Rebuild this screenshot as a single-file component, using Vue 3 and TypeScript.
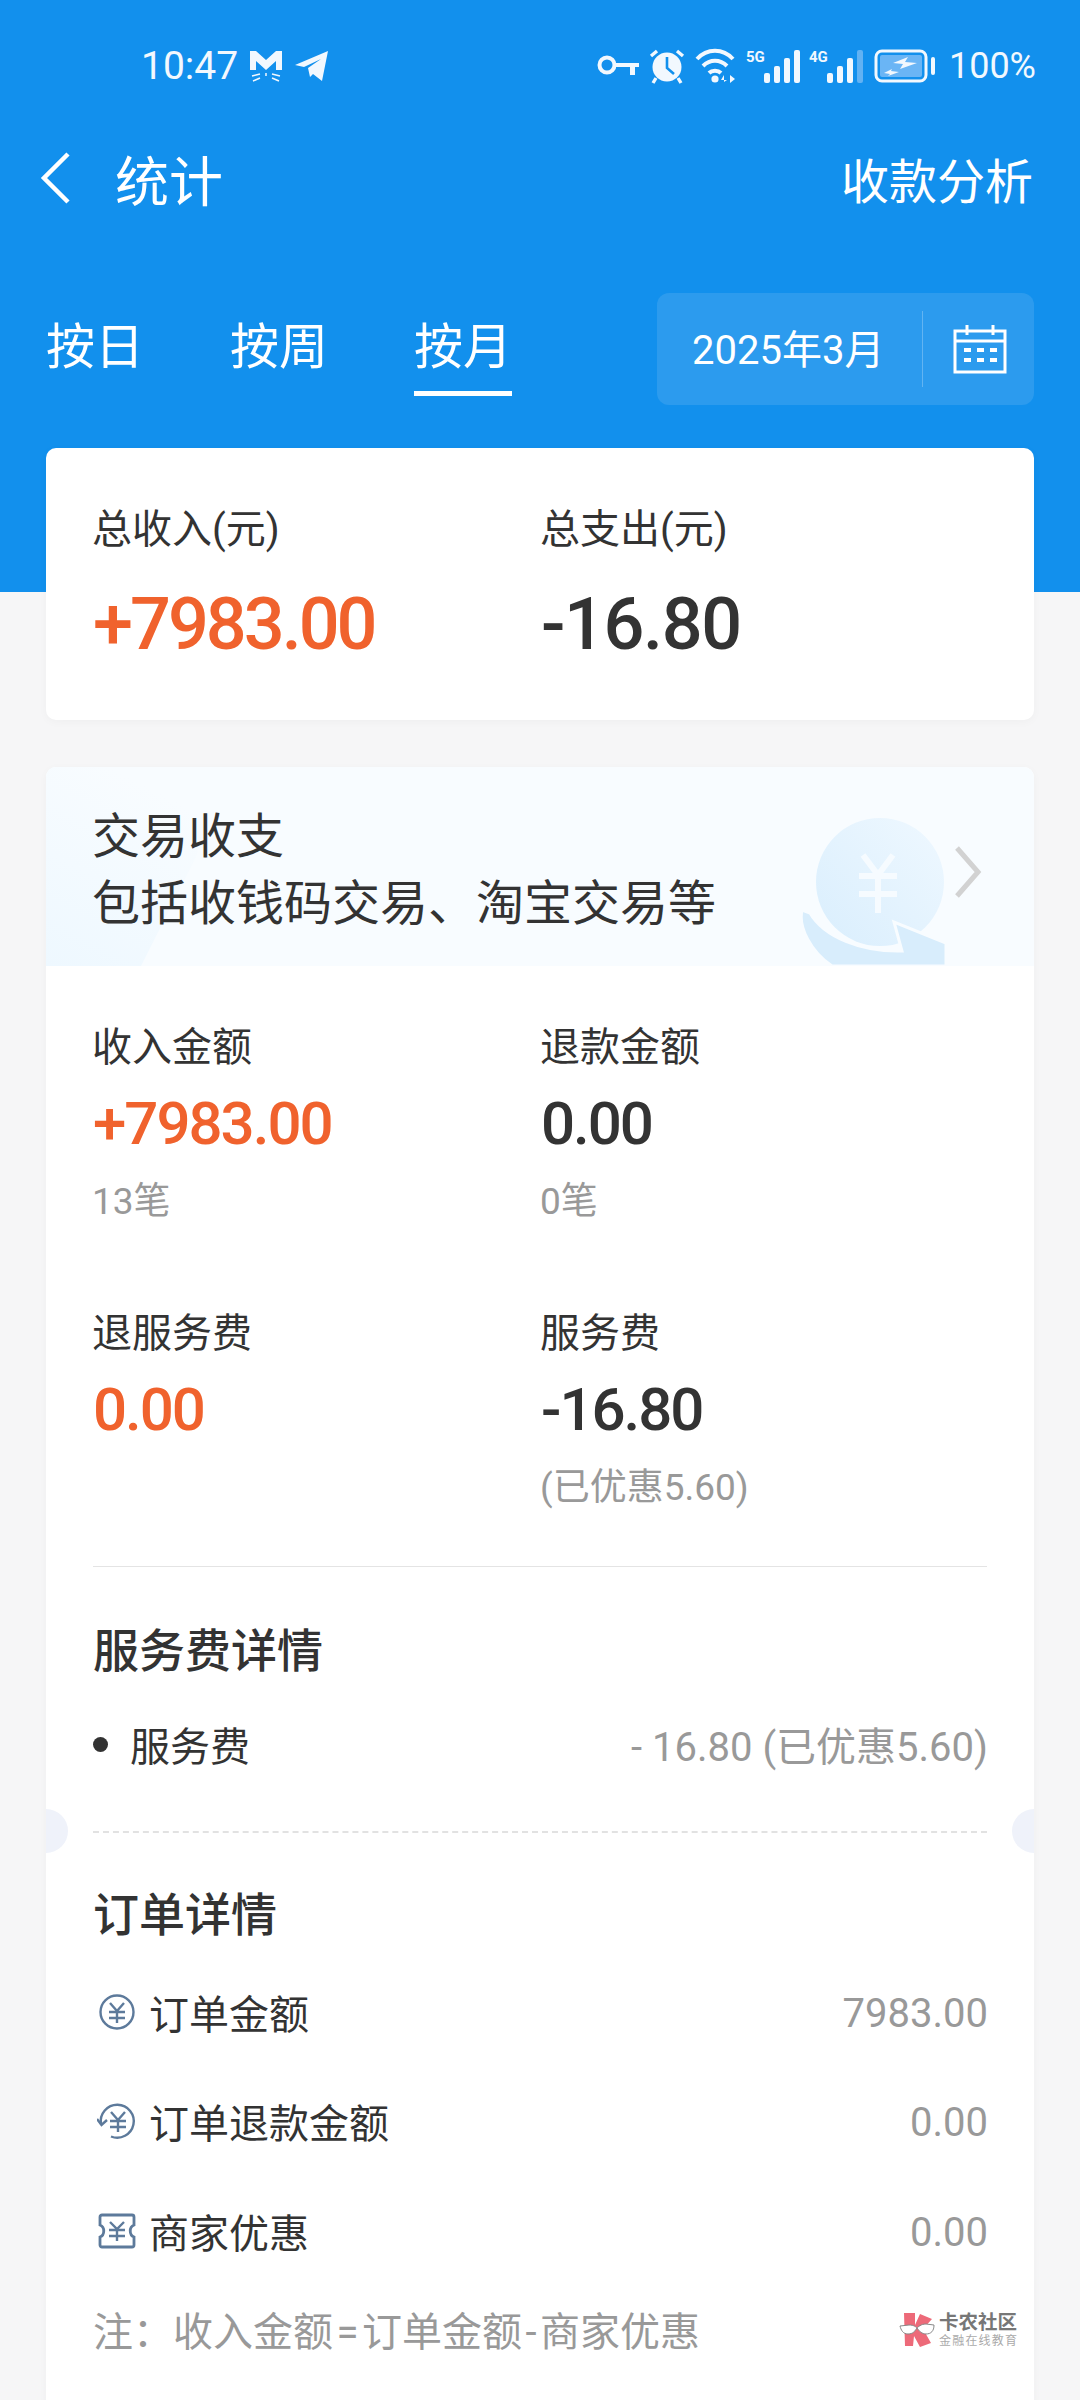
<script setup lang="ts">
const tabs = [
  { label: '按日', active: false },
  { label: '按周', active: false },
  { label: '按月', active: true },
]
const metrics = [
  { label: '收入金额', value: '+7983.00', sub: '13笔', hot: true },
  { label: '退款金额', value: '0.00', sub: '0笔', hot: false },
  { label: '退服务费', value: '0.00', sub: '', hot: true },
  { label: '服务费', value: '-16.80', sub: '(已优惠5.60)', hot: false },
]
const bars = [
  { x: 0, y: 24, h: 10 },
  { x: 10, y: 17, h: 17 },
  { x: 20, y: 9, h: 25 },
  { x: 30, y: 1, h: 33 },
]
</script>

<template>
  <div class="page">
    <header class="hero">
      <div class="status">
        <span class="time">10:47</span>
        <svg class="notif" width="36" height="34" viewBox="0 0 36 34">
          <path d="M2 2h6l10 9 10-9h6v19h-6v-9l-10 9-10-9v9H2z" fill="#f2f8fe" />
          <path d="M4 27l8-2M5 32l7-3M32 27l-8-2M31 32l-7-3M18 24v3" stroke="#f2f8fe" stroke-width="1.5" fill="none" />
        </svg>
        <svg class="notif" width="36" height="32" viewBox="0 0 36 32">
          <path d="M1 15L34 1 28 31 19 24l-3 3-2-9 13-9-17 8z" fill="#f2f8fe" />
        </svg>
        <div class="status-right">
          <svg width="42" height="22" viewBox="0 0 42 22">
            <circle cx="10" cy="10" r="7.5" fill="none" stroke="#f2f8fe" stroke-width="4" />
            <path d="M17 8h25v4h-4v8h-5v-8H17z" fill="#f2f8fe" />
          </svg>
          <svg width="38" height="36" viewBox="0 0 38 36">
            <circle cx="19" cy="19" r="14.5" fill="#f2f8fe" />
            <path d="M19 9v11l7 6" stroke="#1290ed" stroke-width="2.6" fill="none" />
            <path d="M3 8l6-5M35 8l-6-5" stroke="#f2f8fe" stroke-width="3.4" />
            <path d="M8 30l-3 5M30 30l3 5" stroke="#f2f8fe" stroke-width="3.4" />
          </svg>
          <svg width="42" height="36" viewBox="0 0 42 36">
            <path d="M2 11C12 0 28 0 38 11M8 18c7-7 17-7 24 0M14 25c3-3 9-3 12 0" stroke="#f2f8fe" stroke-width="4" fill="none" />
            <circle cx="20" cy="31" r="3.6" fill="#f2f8fe" />
            <path d="M29 34v-7l-3 5h6M35 27v8l5-4z" fill="#f2f8fe" />
          </svg>
          <div class="cell">
            <span class="net">5G</span>
            <svg width="36" height="34" viewBox="0 0 36 34">
              <rect v-for="b in bars" :key="b.x" :x="b.x" :y="b.y" width="6" :height="b.h" rx="2" fill="#f2f8fe" />
            </svg>
          </div>
          <div class="cell">
            <span class="net">4G</span>
            <svg width="36" height="34" viewBox="0 0 36 34">
              <rect v-for="b in bars" :key="b.x" :x="b.x" :y="b.y" width="6" :height="b.h" rx="2" :fill="b.x === 30 ? '#62b2f3' : '#f2f8fe'" />
            </svg>
          </div>
          <svg class="battery" width="64" height="34" viewBox="0 0 64 34">
            <rect x="2" y="2" width="50" height="30" rx="6" fill="none" stroke="#f2f8fe" stroke-width="3" />
            <rect x="6" y="6" width="42" height="22" rx="2" fill="#6ab5f5" />
            <path d="M59 10v14" stroke="#f2f8fe" stroke-width="4" stroke-linecap="round" />
            <path d="M19 14l15-6-3 5 12 1-17 6 3-5zM10 24l8-4-1 2 8 1-11 4 2-2z" fill="#f2f8fe" />
          </svg>
          <span class="pct">100%</span>
        </div>
      </div>
      <nav class="nav">
        <div class="nav-left">
          <svg width="34" height="54" viewBox="0 0 34 54">
            <path d="M30 3L6 27l24 24" fill="none" stroke="#fff" stroke-width="4.5" />
          </svg>
          <span class="title">统计</span>
        </div>
        <span class="action">收款分析</span>
      </nav>
      <div class="filters">
        <div class="tabs">
          <span v-for="t in tabs" :key="t.label" class="tab" :class="{ active: t.active }">{{ t.label }}</span>
        </div>
        <div class="date-box">
          <span class="date">2025年3月</span>
          <span class="date-sep"></span>
          <svg width="54" height="50" viewBox="0 0 54 50">
            <rect x="2" y="7" width="50" height="41" fill="none" stroke="#fff" stroke-width="3" />
            <path d="M2 17h50M14 1v10M40 1v10" stroke="#fff" stroke-width="3" />
            <path d="M11 26h7M24 26h7M37 26h7M11 36h7M24 36h7M37 36h7" stroke="#fff" stroke-width="4" />
          </svg>
        </div>
      </div>
    </header>

    <main class="main">
      <section class="card summary">
        <div class="col">
          <div class="sum-label">总收入(元)</div>
          <div class="sum-value hot tight">+7983.00</div>
        </div>
        <div class="col">
          <div class="sum-label">总支出(元)</div>
          <div class="sum-value">-16.80</div>
        </div>
      </section>

      <section class="card detail">
        <div class="banner">
          <svg class="banner-art" width="988" height="199" viewBox="0 0 988 199">
            <defs>
              <linearGradient id="blob" x1="0" y1="1" x2="0.4" y2="0">
                <stop offset="0" stop-color="#eef8ff" />
                <stop offset="1" stop-color="#f8fcff" />
              </linearGradient>
              <linearGradient id="coin" x1="0" y1="1" x2="1" y2="0">
                <stop offset="0" stop-color="#d9eefd" />
                <stop offset="1" stop-color="#eff8ff" />
              </linearGradient>
            </defs>
            <path d="M0 0h120c40 30 40 60 30 90l-55 109H0z" fill="url(#blob)" />
            <circle cx="834" cy="115" r="64" fill="url(#coin)" />
            <path d="M817 88l15 20 15-20M813 109h38M813 127h38M832 108v38" stroke="#f6fbff" stroke-width="6" fill="none" />
            <path d="M756 143C752 160 765 185 786 199H900V176L848 155 856 184C815 185 778 170 764 146Z" fill="#d8edfc" stroke="#f8fcff" stroke-width="3" />
            <path d="M911 81l21 24-21 24" fill="none" stroke="#d2d2d2" stroke-width="5" />
          </svg>
          <div class="banner-line">交易收支</div>
          <div class="banner-line">包括收钱码交易、淘宝交易等</div>
        </div>

        <div class="metrics">
          <div v-for="m in metrics" :key="m.label" class="metric">
            <div class="metric-label">{{ m.label }}</div>
            <div class="metric-value" :class="{ hot: m.hot }">{{ m.value }}</div>
            <div class="metric-sub">{{ m.sub }}</div>
          </div>
        </div>

        <div class="rule"></div>

        <h2 class="head first">服务费详情</h2>
        <div class="fee-row">
          <span class="dot"></span>
          <span class="fee-name">服务费</span>
          <span class="grey"><span class="minus">-</span>16.80 (已优惠5.60)</span>
        </div>

        <div class="dash-wrap">
          <span class="notch left"></span>
          <div class="dash"></div>
          <span class="notch right"></span>
        </div>

        <h2 class="head second">订单详情</h2>
        <div class="rows">
          <div class="row">
            <svg class="row-icon" width="40" height="40" viewBox="0 0 40 40">
              <circle cx="20" cy="20" r="16.5" fill="none" stroke="#5d7a9b" stroke-width="2.4" />
              <path d="M13 11l7 8 7-8M12 20h16M12 26h16M20 19v12" fill="none" stroke="#5d7a9b" stroke-width="2.4" />
            </svg>
            <span class="row-name">订单金额</span>
            <span class="grey num">7983.00</span>
          </div>
          <div class="row">
            <svg class="row-icon" width="40" height="40" viewBox="0 0 40 40">
              <path d="M4 23A16.5 16.5 0 1 1 14 35.5" fill="none" stroke="#5d7a9b" stroke-width="2.4" />
              <path d="M0 18l4.500 6 5.500-5" fill="none" stroke="#5d7a9b" stroke-width="2.4" />
              <path d="M14 11l7 8 7-8M13 20h16M13 26h16M21 19v12" fill="none" stroke="#5d7a9b" stroke-width="2.4" />
            </svg>
            <span class="row-name">订单退款金额</span>
            <span class="grey num">0.00</span>
          </div>
          <div class="row">
            <svg class="row-icon" width="40" height="40" viewBox="0 0 40 40">
              <path d="M5 4h30a2 2 0 0 1 2 2v8c-5 2-5 10 0 12v8a2 2 0 0 1-2 2H5a2 2 0 0 1-2-2v-8c5-2 5-10 0-12V6a2 2 0 0 1 2-2z" fill="none" stroke="#5d7a9b" stroke-width="2.800" />
              <path d="M13 11l7 7 7-7M12 19h16M12 25h16M20 18v12" fill="none" stroke="#5d7a9b" stroke-width="2.400" />
            </svg>
            <span class="row-name">商家优惠</span>
            <span class="grey num">0.00</span>
          </div>
        </div>
        <div class="note">注：收入金额<span class="sym">=</span>订单金额<span class="sym">-</span>商家优惠</div>
      </section>
    </main>

    <div class="watermark">
      <svg width="36" height="36" viewBox="0 0 36 36">
        <path d="M5 1h11v12L21 2l12 5-9 10 8 14-11 4-6-11-1 10H6z" fill="#ed6a79" />
        <path d="M1 14l9-1c5 0 7 2 8 3 1-1 4-4 9-4l8 1c0 6-3 9-8 9-4 0-7-3-9-6-2 3-4 6-9 6-5 0-7-4-8-8z" fill="#fff" stroke="#888" stroke-width="1" />
      </svg>
      <div class="wm-text">
        <div class="wm-top">卡农社区</div>
        <div class="wm-bottom">金融在线教育</div>
      </div>
    </div>
  </div>
</template>

<style scoped>
.page {
  position: relative;
  width: 1080px;
  height: 2400px;
  overflow: hidden;
  background: #f6f6f7;
  font-family: Roboto, "Noto Sans CJK SC", sans-serif;
  color: #333;
}
.hero {
  height: 592px;
  background: #1290ed;
  color: #fff;
}
.status {
  display: flex;
  align-items: center;
  height: 132px;
  padding: 0 44px 0 141px;
  color: #f2f8fe;
}
.time {
  font-size: 39px;
  margin-right: 10px;
}
.notif {
  margin-right: 10px;
}
.status-right {
  display: flex;
  align-items: center;
  gap: 9px;
  margin-left: auto;
}
.cell {
  display: flex;
  align-items: flex-start;
  height: 34px;
}
.net {
  font-size: 15px;
  font-weight: 700;
  line-height: 16px;
  width: 18px;
}
.battery {
  margin-left: 2px;
}
.pct {
  font-size: 36px;
  margin-left: 2px;
}
.nav {
  display: flex;
  align-items: center;
  justify-content: space-between;
  height: 92px;
  padding: 0 47px 0 38px;
}
.nav-left {
  display: flex;
  align-items: center;
  gap: 43px;
}
.title {
  font-size: 54px;
}
.action {
  font-size: 48px;
}
.filters {
  display: flex;
  justify-content: space-between;
  align-items: flex-start;
  margin-top: 69px;
  padding: 0 46px;
}
.tabs {
  display: flex;
  gap: 86px;
  margin-top: 25px;
}
.tab {
  font-size: 49px;
  line-height: 60px;
  padding-bottom: 13px;
  border-bottom: 5px solid transparent;
}
.tab.active {
  border-bottom-color: #fff;
}
.date-box {
  display: flex;
  align-items: center;
  width: 377px;
  height: 112px;
  padding-left: 35px;
  box-sizing: border-box;
  background: #2c9bee;
  border-radius: 12px;
}
.date {
  font-size: 40px;
  width: 230px;
  padding-bottom: 4px;
  white-space: nowrap;
}
.date-sep {
  width: 1px;
  height: 76px;
  margin-right: 30px;
  background: #62b4f2;
}
.main {
  position: relative;
  margin-top: -144px;
  padding: 0 46px;
}
.card {
  background: #fff;
  border-radius: 10px;
  box-shadow: 0 2px 10px rgba(0, 0, 0, 0.03);
}
.summary {
  display: grid;
  grid-template-columns: 448px 1fr;
  height: 272px;
  padding: 54px 46px 0;
  box-sizing: border-box;
}
.sum-label {
  font-size: 40px;
  line-height: 56px;
}
.sum-value {
  margin-top: 27px;
  margin-left: 1px;
  font-size: 72px;
  font-weight: 500;
  line-height: 80px;
  letter-spacing: -1.400px;
}
.sum-value.tight {
  letter-spacing: -3px;
}
.hot {
  color: #f0622d;
}
.detail {
  margin-top: 47px;
  padding-bottom: 200px;
  overflow: hidden;
}
.banner {
  position: relative;
  height: 199px;
  padding: 36px 46px 0;
  box-sizing: border-box;
  background: #f8fcff;
}
.banner-art {
  position: absolute;
  left: 0;
  top: 0;
}
.banner-line {
  position: relative;
  font-size: 48px;
  line-height: 67px;
}
.metrics {
  display: grid;
  grid-template-columns: 448px 1fr;
  row-gap: 79px;
  padding: 54px 46px 0;
}
.metric-label {
  font-size: 40px;
  line-height: 56px;
}
.metric-value {
  margin-top: 10px;
  margin-left: 1px;
  font-size: 60px;
  font-weight: 500;
  line-height: 76px;
  letter-spacing: -2px;
}
.metric-sub {
  margin-top: 15px;
  min-height: 50px;
  font-size: 37px;
  line-height: 50px;
  color: #999;
}
.rule {
  height: 1px;
  margin: 53px 47px 0;
  background: #e4e4e4;
}
.head {
  margin: 0;
  padding: 0 47px;
  font-size: 46px;
  font-weight: 500;
  line-height: 64px;
}
.head.first {
  margin-top: 52px;
}
.head.second {
  margin-top: 50px;
}
.fee-row {
  display: flex;
  align-items: center;
  height: 60px;
  margin-top: 31px;
  padding: 0 46px 0 47px;
  font-size: 40px;
}
.dot {
  width: 15px;
  height: 15px;
  border-radius: 50%;
  background: #333;
  margin-right: 22px;
}
.fee-name {
  flex: 1;
}
.grey {
  color: #999;
  font-size: 40px;
}
.num {
  padding-top: 3px;
}
.minus {
  margin-right: 10px;
}
.dash-wrap {
  position: relative;
  margin: 57px 47px 0;
}
.dash {
  border-top: 2px dashed #e2e2e2;
}
.notch {
  position: absolute;
  top: -22px;
  width: 44px;
  height: 44px;
  border-radius: 50%;
  background: #eff2fa;
}
.notch.left {
  left: -69px;
}
.notch.right {
  right: -69px;
}
.rows {
  margin-top: 10px;
  padding: 0 46px 0 47px;
}
.row {
  display: flex;
  align-items: center;
  height: 109.500px;
  font-size: 40px;
}
.row-icon {
  margin-right: 12px;
  margin-left: 4px;
}
.row-name {
  flex: 1;
}
.note {
  margin-top: 17px;
  padding: 0 47px;
  font-size: 40px;
  line-height: 60px;
  color: #999;
}
.sym {
  padding: 0 3.500px;
}
.watermark {
  position: absolute;
  left: 899px;
  top: 2312px;
  display: flex;
  gap: 4px;
  align-items: flex-start;
}
.wm-top {
  font-size: 19.500px;
  font-weight: 700;
  line-height: 22px;
  color: #777;
  white-space: nowrap;
}
.wm-bottom {
  margin-top: 1px;
  font-size: 12px;
  line-height: 13px;
  letter-spacing: 1.200px;
  color: #aaa;
  white-space: nowrap;
}
</style>
